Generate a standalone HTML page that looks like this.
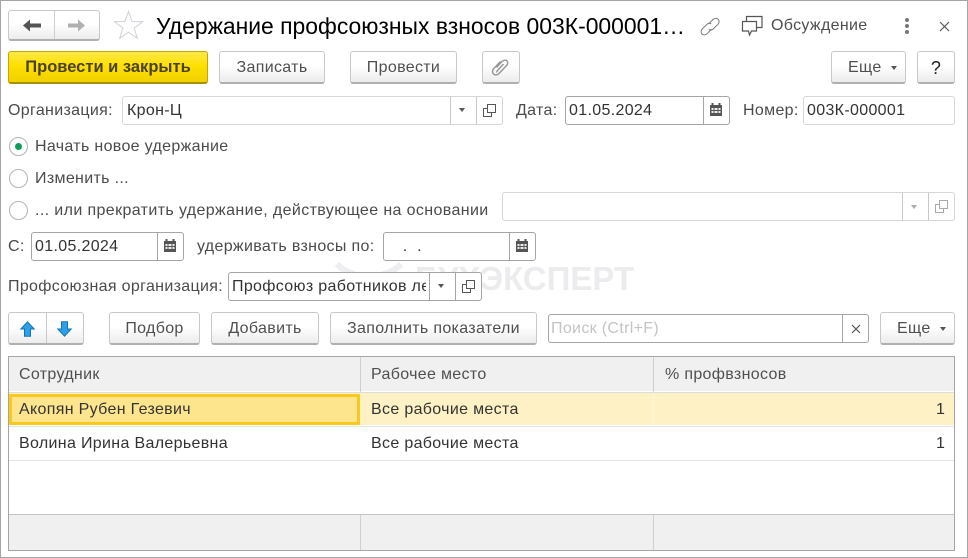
<!DOCTYPE html>
<html lang="ru"><head><meta charset="utf-8"><title>Удержание</title>
<style>
html,body{margin:0;padding:0;background:#fff}
#p{position:relative;width:968px;height:558px;overflow:hidden;background:#fff;font-family:"Liberation Sans",sans-serif;font-size:16px;letter-spacing:.33px;color:#4b4b4b;box-sizing:border-box;border:1px solid #a5a5a5}
#w{position:absolute;left:-1px;top:-1px;width:968px;height:558px}
#w>*{position:absolute;box-sizing:border-box}
.t{white-space:nowrap;line-height:20px;height:20px}
.btn{border:1px solid #c8c8c8;border-bottom:2px solid #b0b0b0;border-radius:3px;background:linear-gradient(#fff 0%,#fff 45%,#ececec 100%);text-align:center;line-height:32px;color:#4f4f4f;white-space:nowrap}
.inp{border:1px solid #d6d6d6;border-radius:3px;background:#fff}
.inp.d{border-color:#a5a5a5}
.v{position:absolute;left:4px;top:4px;line-height:20px;color:#333;white-space:nowrap}
.s{position:absolute;top:0;bottom:0;width:1px;background:#c8c8c8}
.d .s{background:#a5a5a5}
.r{border:1px solid #b4b4b4;border-radius:50%;width:19px;height:19px;background:#fff}
.tri{width:0;height:0;border-left:3.5px solid transparent;border-right:3.5px solid transparent;border-top:4px solid #555}
.cell{line-height:20px;color:#333;white-space:nowrap}
svg{overflow:visible}
</style></head><body><div id="p"><div id="w">

<div class="btn" style="left:8px;top:10px;width:92px;height:31px"></div>
<div style="left:54px;top:11px;width:1px;height:28px;background:#cfcfcf"></div>
<svg style="left:23px;top:19px" width="18" height="14"><path d="M0 6.500L7 .5V4.500H18V8.500H7V12.500Z" fill="#555"/></svg>
<svg style="left:68px;top:19px" width="17" height="14"><path d="M17 6.500L10 .5V4.500H0V8.500H10V12.500Z" fill="#b0b0b0"/></svg>
<svg style="left:113px;top:10px" width="31" height="30"><path d="M15.500 1.500L19.200 11.600H29.700L21.200 18L24.300 28.300L15.500 22.200L6.700 28.300L9.800 18L1.300 11.600H11.800Z" fill="#fff" stroke="#cdd1d6" stroke-width="1"/></svg>
<div class="t" style="left:156px;top:14px;height:24px;line-height:24px;font-size:22.9px;letter-spacing:0;color:#000">Удержание профсоюзных взносов 003К-000001…</div>
<svg style="left:699px;top:16px" width="22" height="22" fill="none" stroke="#7a7a7a" stroke-width="1"><path d="M9.500 8L14 3.500C15.500 2 18 2 19.200 3.300C20.500 4.600 20.400 6.800 19 8.200L14.200 13C12.800 14.400 11 14.400 9.800 13.400"/><path d="M12.500 13L8 17.800C6.600 19.200 4.200 19.300 3 18C1.700 16.700 1.800 14.500 3.200 13L8 8.300C9.300 7 11.200 7 12.300 8"/></svg>
<svg style="left:741px;top:15px" width="24" height="22" fill="none" stroke="#555" stroke-width="1.200"><path d="M1.500 6.500H15.500V16H10.500L8.500 20L7.500 16H1.500Z"/><path d="M5.500 6V1.500H21V12.500H15.500"/></svg>
<div class="t" style="left:771px;top:16px;color:#4f4f4f">Обсуждение</div>
<svg style="left:904px;top:18px" width="6" height="16" fill="#777"><circle cx="3" cy="2" r="2"/><circle cx="3" cy="8" r="2"/><circle cx="3" cy="14" r="2"/></svg>
<svg style="left:939px;top:21px" width="11" height="11" stroke="#555" stroke-width="1.200"><path d="M1 1L10 10M10 1L1 10"/></svg>

<div class="btn" style="left:8px;top:51px;width:200px;height:33px;background:linear-gradient(#ffe94a 0%,#ffe000 45%,#f0d000 100%);border:1px solid #c4a600;border-bottom:2px solid #a89000;color:#4a4030;font-weight:bold;line-height:31px;font-size:16.500px;letter-spacing:0">Провести и закрыть</div>
<div class="btn" style="left:219px;top:51px;width:106px;height:33px">Записать</div>
<div class="btn" style="left:350px;top:51px;width:107px;height:33px">Провести</div>
<div class="btn" style="left:482px;top:51px;width:38px;height:33px"></div>
<svg style="left:491px;top:58px" width="18" height="19" fill="none" stroke="#999" stroke-width="1.500"><path d="M5.500 9.500L11 3.500C12.500 2 14.800 1.700 16 3C17.200 4.300 16.700 6.400 15.400 7.800L8 15.500C6.500 17 4 17.500 2.500 16C1 14.500 1.300 12 2.800 10.500L9.500 3.500"/><path d="M12.500 6L6.500 12.500C5.700 13.300 5.600 14 6 14.400"/></svg>
<div class="btn" style="left:831px;top:51px;width:75px;height:33px;text-align:left;padding-left:16px">Еще</div>
<div class="tri" style="left:891px;top:66px"></div>
<div class="btn" style="left:917px;top:51px;width:38px;height:33px;color:#222;font-size:18px">?</div>

<div class="t" style="left:8px;top:101px">Организация:</div>
<div class="inp" style="left:122px;top:96px;width:381px;height:29px"><span class="v">Крон-Ц</span><i class="s" style="left:327px"></i><i class="s" style="left:353px"></i></div>
<div class="tri" style="left:459px;top:108px"></div>
<svg style="left:483px;top:104px" width="14" height="13" fill="none" stroke="#555"><path d="M4.500 .5H12.500V8.500H4.500Z"/><path d="M4.500 4.500H.5V12.500H8.500V8.500"/></svg>
<div class="t" style="left:516px;top:101px">Дата:</div>
<div class="inp d" style="left:565px;top:96px;width:165px;height:29px"><span class="v" style="left:3px">01.05.2024</span><i class="s" style="left:137px"></i></div>
<svg class="cal" style="left:710px;top:103px" width="12" height="13"><path d="M0 2H12V13H0Z" fill="#555"/><path d="M2.500 0V3M9.500 0V3" stroke="#555" stroke-width="2"/><path d="M1.500 5H10.500V7H1.500ZM1.500 8H10.500V10H1.500Z" fill="#eee"/><path d="M4 5V12M8 5V12" stroke="#555"/></svg>
<div class="t" style="left:743px;top:101px">Номер:</div>
<div class="inp" style="left:803px;top:96px;width:152px;height:29px"><span class="v" style="left:3px">003К-000001</span></div>

<div class="r" style="left:9px;top:137px"></div>
<div style="left:15px;top:143px;width:7px;height:7px;border-radius:50%;background:#0f9d58"></div>
<div class="t" style="left:35px;top:137px">Начать новое удержание</div>
<div class="r" style="left:9px;top:169px"></div>
<div class="t" style="left:35px;top:169px">Изменить ...</div>
<div class="r" style="left:9px;top:201px"></div>
<div class="t" style="left:35px;top:201px;letter-spacing:.38px">... или прекратить удержание, действующее на основании</div>
<div class="inp" style="left:502px;top:192px;width:453px;height:29px"><i class="s" style="left:399px"></i><i class="s" style="left:425px"></i></div>
<div class="tri" style="left:911px;top:205px;border-top-color:#aaa"></div>
<svg style="left:935px;top:200px" width="14" height="13" fill="none" stroke="#aaa"><path d="M4.500 .5H12.500V8.500H4.500Z"/><path d="M4.500 4.500H.5V12.500H8.500V8.500"/></svg>

<svg style="left:335px;top:262px" width="68" height="34" fill="none" stroke="#eeeef0" stroke-width="6"><circle cx="20" cy="24" r="8"/><circle cx="46" cy="24" r="8"/><path d="M2 2C8 9 16 11 26 15M66 2C60 9 52 11 40 15"/></svg>
<div class="t" style="left:415px;top:262px;height:33px;line-height:33px;font-size:33px;font-weight:bold;color:#ececef;letter-spacing:0">БУХЭКСПЕРТ</div>

<div class="t" style="left:8px;top:237px">С:</div>
<div class="inp d" style="left:31px;top:232px;width:153px;height:29px"><span class="v" style="left:3px">01.05.2024</span><i class="s" style="left:125px"></i></div>
<svg style="left:164px;top:239px" width="12" height="13"><path d="M0 2H12V13H0Z" fill="#555"/><path d="M2.500 0V3M9.500 0V3" stroke="#555" stroke-width="2"/><path d="M1.500 5H10.500V7H1.500ZM1.500 8H10.500V10H1.500Z" fill="#eee"/><path d="M4 5V12M8 5V12" stroke="#555"/></svg>
<div class="t" style="left:197px;top:237px">удерживать взносы по:</div>
<div class="inp d" style="left:383px;top:232px;width:153px;height:29px"><span class="v" style="left:14px">&nbsp;.&nbsp;&nbsp;.</span><i class="s" style="left:125px"></i></div>
<svg style="left:516px;top:239px" width="12" height="13"><path d="M0 2H12V13H0Z" fill="#555"/><path d="M2.500 0V3M9.500 0V3" stroke="#555" stroke-width="2"/><path d="M1.500 5H10.500V7H1.500ZM1.500 8H10.500V10H1.500Z" fill="#eee"/><path d="M4 5V12M8 5V12" stroke="#555"/></svg>

<div class="t" style="left:8px;top:277px">Профсоюзная организация:</div>
<div class="inp d" style="left:228px;top:272px;width:254px;height:29px;background:#fff;overflow:hidden"><span class="v" style="left:3px;width:194px;overflow:hidden">Профсоюз работников лесного</span><i class="s" style="left:200px"></i><i class="s" style="left:226px"></i></div>
<div class="tri" style="left:438px;top:284px"></div>
<svg style="left:462px;top:280px" width="14" height="13" fill="none" stroke="#555"><path d="M4.500 .5H12.500V8.500H4.500Z"/><path d="M4.500 4.500H.5V12.500H8.500V8.500"/></svg>

<div class="btn" style="left:8px;top:312px;width:76px;height:33px"></div>
<div style="left:46px;top:313px;width:1px;height:30px;background:#c8c8c8"></div>
<svg style="left:20px;top:321px" width="15" height="16"><path d="M7.500 .8L14.200 8H10.500V15.200H4.500V8H.8Z" fill="#2ca0e8" stroke="#1272b0"/></svg>
<svg style="left:57px;top:321px" width="15" height="16"><path d="M7.500 15.200L14.200 8H10.500V.8H4.500V8H.8Z" fill="#2ca0e8" stroke="#1272b0"/></svg>
<div class="btn" style="left:109px;top:312px;width:91px;height:33px">Подбор</div>
<div class="btn" style="left:211px;top:312px;width:108px;height:33px">Добавить</div>
<div class="btn" style="left:330px;top:312px;width:207px;height:33px">Заполнить показатели</div>
<div class="inp d" style="left:548px;top:314px;width:321px;height:29px"><span class="v" style="left:2px;color:#c4c4c4">Поиск (Ctrl+F)</span><i class="s" style="left:293px"></i></div>
<svg style="left:851px;top:324px" width="10" height="10" stroke="#555" stroke-width="1.200"><path d="M1 1L9 9M9 1L1 9"/></svg>
<div class="btn" style="left:880px;top:312px;width:75px;height:33px;text-align:left;padding-left:16px">Еще</div>
<div class="tri" style="left:940px;top:327px"></div>

<div style="left:8px;top:356px;width:947px;height:195px;border:1px solid #a5a5a5;background:#fff"></div>
<div style="left:9px;top:357px;width:945px;height:34px;background:#f0f0f0"></div>
<div style="left:9px;top:392px;width:945px;height:1px;background:#dcdcdc"></div>
<div style="left:360px;top:357px;width:1px;height:35px;background:#cfcfcf"></div>
<div style="left:653px;top:357px;width:1px;height:35px;background:#cfcfcf"></div>
<div class="cell" style="left:19px;top:365px;color:#4f4f4f">Сотрудник</div>
<div class="cell" style="left:371px;top:365px;color:#4f4f4f">Рабочее место</div>
<div class="cell" style="left:665px;top:365px;color:#4f4f4f">% профвзносов</div>

<div style="left:9px;top:393px;width:945px;height:32px;background:#fdf1c5"></div>
<div style="left:653px;top:393px;width:1px;height:32px;background:#fff6da"></div>
<div style="left:9px;top:394px;width:351px;height:31px;background:#fde58d;border:3px solid #fbc91e"></div>
<div class="cell" style="left:19px;top:400px">Акопян Рубен Гезевич</div>
<div class="cell" style="left:371px;top:400px">Все рабочие места</div>
<div class="cell" style="left:936px;top:400px">1</div>
<div style="left:9px;top:426px;width:945px;height:1px;background:#e4e4e4"></div>
<div class="cell" style="left:19px;top:434px">Волина Ирина Валерьевна</div>
<div class="cell" style="left:371px;top:434px">Все рабочие места</div>
<div class="cell" style="left:936px;top:434px">1</div>
<div style="left:9px;top:460px;width:945px;height:1px;background:#e4e4e4"></div>

<div style="left:9px;top:514px;width:945px;height:36px;background:#f0f0f0;border-top:1px solid #c4c4c4"></div>
<div style="left:360px;top:515px;width:1px;height:35px;background:#cfcfcf"></div>
<div style="left:653px;top:515px;width:1px;height:35px;background:#cfcfcf"></div>
</div></div></body></html>
